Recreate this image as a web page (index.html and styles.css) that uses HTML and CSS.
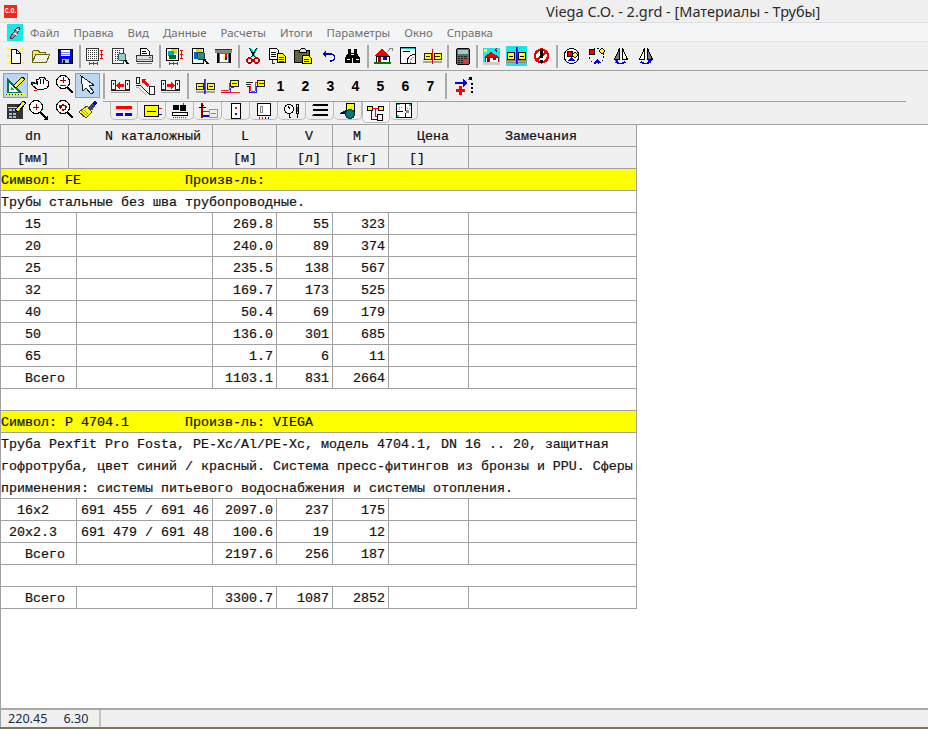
FILE: index.html
```html
<!DOCTYPE html>
<html lang="ru">
<head>
    <meta charset="UTF-8">
    <title>Viega C.O. - 2.grd - [Материалы - Трубы]</title>
    <link rel="stylesheet" href="styles.css">
</head>
<body>
<svg class="defs"><defs>
    <pattern id="dy" width="2" height="2" patternUnits="userSpaceOnUse"><rect width="2" height="2" fill="#ff0"/><rect width="1" height="1" fill="#fff"/><rect x="1" y="1" width="1" height="1" fill="#fff"/></pattern>
    <pattern id="dots" width="2" height="2" patternUnits="userSpaceOnUse"><rect width="1" height="1" fill="#333"/></pattern>
</defs></svg>
<div class="window">

    <!--заголовок-->
    <div class="titleBar">
        <div class="appIcon">C.O.</div>
        <div class="titleText">Viega C.O. - 2.grd - [Материалы - Трубы]</div>
    </div>

    <!--меню-->
    <div class="menuBar">
        <div class="docIcon"><svg width="16" height="17" viewBox="0 0 16 17"><rect width="16" height="17" fill="#19e6e6"/><path d="M3 14l3-5 5-6 2 1-3 6-5 5z" fill="#999" stroke="#333"/><path d="M7 9l3 2M9 5l3 2" stroke="#fff"/></svg></div>
        <span>Файл</span><span>Правка</span><span>Вид</span><span>Данные</span><span>Расчеты</span><span>Итоги</span><span>Параметры</span><span>Окно</span><span>Справка</span>
    </div>

    <!--панель 1-->
    <div class="toolRow">
        <div class="btn"><svg class="ic" viewBox="0 0 25 24"><path d="M4 4l4 3M21 4l-4 3M4 12h3M4 20l4-3M21 20l-4-3" stroke="#ff0" stroke-width="2"/><path d="M8.5 5.5h5l4 4v10h-9z" fill="#fff" stroke="#000"/><path d="M13.5 5.5v4h4" fill="none" stroke="#000"/></svg></div>
        <div class="btn"><svg class="ic" viewBox="0 0 25 24"><path d="M4.5 17.5v-10l1-1h5l1 2h6v2" fill="#ffe070" stroke="#660"/><path d="M4.5 18.5l3-8h14l-3 8z" fill="url(#dy)" stroke="#660"/></svg></div>
        <div class="btn"><svg class="ic" viewBox="0 0 25 24"><rect x="5.5" y="5.5" width="14" height="14" fill="#00f" stroke="#000"/><path d="M8 6h9v6H8z" fill="#fff"/><path d="M8 8h9M8 10h9" stroke="#88f"/><path d="M9 15h7v4H9z" fill="#bbb"/><path d="M10 16h2v3h-2z" fill="#003"/></svg></div>
        <div class="sep"></div>
        <div class="btn"><svg class="ic" viewBox="0 0 25 24"><rect x="4.5" y="4.5" width="12" height="12" fill="#fff" stroke="#333"/><rect x="6" y="6" width="9" height="9" fill="url(#dots)"/><path d="M19.5 6v8M18 6h3M18 14h3M18 10h3M7 19.5h8M7 18v3M15 18v3M11 18v3" stroke="#f00" fill="none"/></svg></div>
        <div class="btn"><svg class="ic" viewBox="0 0 25 24"><rect x="5.5" y="4.5" width="11" height="15" fill="#fff" stroke="#333"/><rect x="7" y="6" width="7" height="11" fill="url(#dots)"/><circle cx="15" cy="13" r="4" fill="#9cc" stroke="#355"/><path d="M18 16l3 4" stroke="#000" stroke-width="2"/></svg></div>
        <div class="btn"><svg class="ic" viewBox="0 0 25 24"><path d="M8.5 4.5h6l3 3v4h-9z" fill="#fff" stroke="#000"/><path d="M10 7h4M10 9h5" stroke="#000"/><path d="M4.5 11.5h16v6h-16z" fill="#ddd" stroke="#333"/><path d="M4 15.5h17" stroke="#888"/><path d="M17 13h2" stroke="#f00"/><path d="M5 19h15" stroke="#777"/></svg></div>
        <div class="sep"></div>
        <div class="btn"><svg class="ic" viewBox="0 0 25 24"><rect x="4.5" y="4.5" width="12" height="12" fill="#fff" stroke="#000"/><rect x="9" y="5" width="6" height="5" fill="#dd0"/><rect x="6" y="7" width="6" height="5" fill="#0aa"/><rect x="7" y="11" width="7" height="4" fill="#063"/><path d="M19.5 6v8M18 6h3M18 14h3M18 10h3M7 19.5h8M7 18v3M15 18v3M11 18v3" stroke="#f00" fill="none"/></svg></div>
        <div class="btn"><svg class="ic" viewBox="0 0 25 24"><rect x="5.5" y="4.5" width="11" height="15" fill="#fff" stroke="#000"/><rect x="9" y="5" width="6" height="5" fill="#dd0"/><rect x="7" y="8" width="5" height="7" fill="#06c"/><circle cx="14" cy="12" r="4" fill="#388" stroke="#233"/><path d="M17 15l4 5" stroke="#000" stroke-width="2"/></svg></div>
        <div class="btn"><svg class="ic" viewBox="0 0 25 24"><path d="M4 6h17v3H4z" fill="#888"/><path d="M4 5.5h17" stroke="#333"/><path d="M6.5 9v10M18.5 9v10" stroke="#000" stroke-width="2"/><rect x="8" y="9" width="9" height="9" fill="#fff" stroke="#666"/><path d="M14 10h2v3h-2z" fill="#f00"/><path d="M14 13h2v3h-2z" fill="#00f"/><path d="M12 11h2v5h-2z" fill="#ff0"/></svg></div>
        <div class="sep"></div>
        <div class="btn"><svg class="ic" viewBox="0 0 25 24"><path d="M9 4l5 9M16 4l-5 9" stroke="#0cc" stroke-width="2"/><path d="M8.5 4l5 9M15.5 4l-5 9" stroke="#000"/><circle cx="8.5" cy="16.5" r="2.6" fill="none" stroke="#b00" stroke-width="1.3"/><circle cx="15.5" cy="16.5" r="2.6" fill="none" stroke="#b00" stroke-width="1.3"/></svg></div>
        <div class="btn"><svg class="ic" viewBox="0 0 25 24"><path d="M3.5 4.5h7l2 2v9h-9z" fill="#fff" stroke="#000"/><path d="M5 8h5M5 10h5M5 12h5" stroke="#000"/><path d="M11.5 9.5h5l3 3v6h-8z" fill="#ff0" stroke="#000"/><path d="M13 13h5M13 15h5M13 17h5" stroke="#333"/><path d="M6 16v3h3" stroke="#333" fill="none"/></svg></div>
        <div class="btn"><svg class="ic" viewBox="0 0 25 24"><path d="M3.5 6.5h15v12h-15z" fill="#663" stroke="#000"/><path d="M8.5 6.5l2-2h3l2 2v2h-7z" fill="#ddd" stroke="#000"/><path d="M11.5 11.5h6l3 3v5h-9z" fill="#ff0" stroke="#000"/><path d="M13 15h5M13 17h5" stroke="#00a"/></svg></div>
        <div class="btn"><svg class="ic" viewBox="0 0 25 24"><path d="M9 10h6c5 0 5 7-1 7" fill="none" stroke="#00a" stroke-width="1.4"/><path d="M6 10l4-3v6z" fill="#00a"/></svg></div>
        <div class="btn"><svg class="ic" viewBox="0 0 25 24"><path d="M8 5h3v4h3V5h3v4l3 5v5h-7v-5h-1v5H5v-5l3-5z" fill="#000"/><path d="M7 15h3M16 15h3M11 10h3" stroke="#fff"/></svg></div>
        <div class="sep"></div>
        <div class="btn"><svg class="ic" viewBox="0 0 25 24"><path d="M4 12l8-7 8 7z" fill="#e00"/><path d="M6 12h13v6H6z" fill="#fff" stroke="#000"/><path d="M8 13h3v5H8z" fill="#900"/><path d="M13 13h4v3h-4z" fill="#00f"/><path d="M4 18h17v2H4z" fill="#070"/><path d="M17 8l4-4M19 4h3v3" stroke="#888" fill="none"/></svg></div>
        <div class="btn"><svg class="ic" viewBox="0 0 25 24"><path d="M5.5 3.5h15v16h-15z" fill="#fff" stroke="#000"/><path d="M6 4h14v1H6z" fill="#0cc"/><path d="M8 7h7" stroke="#000"/><path d="M12 19c0-5 2-8 8-9" fill="none" stroke="#000"/><path d="M15 19c0-3 2-6 5-6" fill="none" stroke="#999" stroke-dasharray="2 1"/></svg></div>
        <div class="btn"><svg class="ic" viewBox="-2 -2 29 28"><path d="M2 16h21M2 18h21M2 20h21" stroke="#999"/><rect x="3.5" y="8.5" width="8" height="7" fill="#ff0" stroke="#000"/><rect x="14.5" y="8.5" width="8" height="7" fill="#ff0" stroke="#000"/><path d="M5 12h5M16 12h5" stroke="#000"/><path d="M12 4v17" stroke="#00f"/><path d="M13 4v17" stroke="#f00"/></svg></div>
        <div class="sep"></div>
        <div class="btn"><svg class="ic" viewBox="0 0 25 24"><rect x="6.5" y="4.5" width="13" height="16" rx="2" fill="#666" stroke="#000"/><rect x="8" y="6" width="10" height="4" fill="#9cc"/><path d="M8 12h2M11 12h2M14 12h3M8 14h2M11 14h2M14 14h3M8 16h2M11 16h2M8 18h2M11 18h2" stroke="#222"/><path d="M14 16h3M14 18h3" stroke="#e33"/></svg></div>
        <div class="sep"></div>
        <div class="btn"><svg class="ic" viewBox="0 0 25 24"><rect x="4" y="4" width="17" height="17" fill="#19e6e6"/><path d="M5 5h3v3H5z" fill="#ff0"/><path d="M16 6l2-2M18 8l-2-3" stroke="#333"/><path d="M5 13l7-5 8 5z" fill="#e00"/><path d="M6 13h13v5H6z" fill="#fff" stroke="#900"/><path d="M8 14h3v4H8zM14 14h3v2h-3z" fill="#900"/><path d="M4 18h17v3H4z" fill="#ccc"/></svg></div>
        <div class="btn"><svg class="ic" viewBox="0 0 25 24"><rect x="2" y="2" width="21" height="20" fill="#19e6e6"/><path d="M2 16h21M2 18h21" stroke="#888"/><rect x="3.5" y="8.5" width="7" height="7" fill="#ff0" stroke="#000"/><rect x="14.5" y="8.5" width="7" height="7" fill="#ff0" stroke="#000"/><path d="M5 12h4M16 12h4" stroke="#000"/><path d="M12 3v17" stroke="#00f"/><path d="M13 3v17" stroke="#f00"/></svg></div>
        <div class="btn"><svg class="ic" viewBox="0 0 25 24"><circle cx="12.5" cy="12" r="6.5" fill="#fff" stroke="#e00" stroke-width="2.4"/><path d="M7 17l11-10" stroke="#e00" stroke-width="2"/><path d="M11 5h3v9h-3zM11 16h3v3h-3z" fill="#000"/></svg></div>
        <div class="sep"></div>
        <div class="btn"><svg class="ic" viewBox="0 0 25 24"><circle cx="12.5" cy="12" r="7.5" fill="#fff" stroke="#000"/><rect x="8" y="7" width="5" height="5" fill="#e00" stroke="#000"/><circle cx="16" cy="11" r="2.2" fill="#ff0" stroke="#000"/><path d="M8 17l4-4 4 4z" fill="#00c"/></svg></div>
        <div class="btn"><svg class="ic" viewBox="0 0 25 24"><circle cx="12.5" cy="12" r="7.5" fill="none" stroke="#000" stroke-dasharray="2 2"/><rect x="5" y="5" width="5" height="5" fill="#e00" stroke="#000"/><circle cx="18" cy="7" r="2.2" fill="#ff0" stroke="#000"/><path d="M9 19l4-4 4 4z" fill="#00c"/></svg></div>
        <div class="btn"><svg class="ic" viewBox="0 0 25 24"><path d="M11.5 4.5v11h-5z" fill="#777" stroke="#000"/><path d="M14.5 4.5v11h5z" fill="#fff" stroke="#000"/><path d="M8 18c2 2 7 2 9 0" fill="none" stroke="#00f" stroke-width="1.6"/><path d="M6 16h4v4z" fill="#00f"/></svg></div>
        <div class="btn"><svg class="ic" viewBox="0 0 25 24"><path d="M11.5 4.5v11h-5z" fill="#fff" stroke="#000"/><path d="M14.5 4.5v11h5z" fill="#777" stroke="#000"/><path d="M8 18c2 2 7 2 9 0" fill="none" stroke="#00f" stroke-width="1.6"/><path d="M19 16h-4v4z" fill="#00f"/></svg></div>
    </div>

    <!--панель 2-->
    <div class="toolBlock">
        <div class="leftTools">
            <div class="tool active"><svg class="ic" viewBox="0 0 25 24"><path d="M5 20V7l13 13z" fill="#fff" stroke="#075" stroke-width="2"/><path d="M8 17v-3l3 3z" fill="#0a7"/><path d="M10 13l9-9 3 2-9 9z" fill="#ff0" stroke="#000"/><path d="M2 21h20" stroke="#ff0" stroke-width="2"/><path d="M3 21h18" stroke="#000" stroke-dasharray="1 2"/></svg></div>
            <div class="tool"><svg class="ic" viewBox="0 0 25 24"><path d="M5 13l-2-3 2-1 3 2 1-5 2 0 1-2 2 1 2-1 2 3 2 1 1 4-2 3-3 1-5 1-2-1z" fill="#fff" stroke="#000"/><path d="M9 8l1 4M12 6l1 5M15 6l1 5" stroke="#000"/><path d="M4 10l2 1M6 17l3 1" stroke="#e00"/></svg></div>
            <div class="tool small"><svg class="ic" viewBox="0 0 25 24"><circle cx="10" cy="9" r="6.5" fill="#fff" stroke="#000"/><path d="M7 7h6M10 4v6M7 12h6" stroke="#900"/><path d="M14 14l6 6" stroke="#000" stroke-width="2.5"/></svg></div>
            <div class="tool active"><svg class="ic" viewBox="0 0 25 24"><path d="M6 3l13 9-5 1 5 6-3 2-5-6-3 3z" fill="#fff" stroke="#222"/></svg></div>
            <div class="tool"><svg class="ic" viewBox="0 0 25 24"><rect x="4" y="6" width="16" height="15" fill="#333"/><path d="M5 9h14" stroke="#ccc"/><path d="M6 11h3v2H6zM10 11h3v2h-3zM14 11h3v2h-3zM6 15h3v2H6zM10 15h3v2h-3zM6 18h3v2H6zM10 18h3v2h-3z" fill="#9bd"/><path d="M12 12l8-9 3 2-8 9z" fill="#ff0" stroke="#000"/></svg></div>
            <div class="tool"><svg class="ic" viewBox="0 0 25 24"><circle cx="8" cy="9" r="6.5" fill="#fff" stroke="#000"/><path d="M5 9h6M8 6v6" stroke="#900"/><path d="M12 14l7 7" stroke="#000" stroke-width="2.5"/><path d="M20 17v5h-5z" fill="#000"/></svg></div>
            <div class="tool small"><svg class="ic" viewBox="0 0 25 24"><circle cx="10" cy="9" r="6.5" fill="#fff" stroke="#000"/><path d="M7 10c0-3 5-4 6-1 0 3-3 3-4 3" fill="none" stroke="#900" stroke-width="1.5"/><path d="M6 7l1 4 3-2z" fill="#900"/><path d="M14 14l6 6" stroke="#000" stroke-width="2.5"/></svg></div>
            <div class="tool"><svg class="ic" viewBox="0 0 25 24"><path d="M4 14l8-6 5 6-6 6z" fill="#ff0" stroke="#444"/><path d="M7 13l5 5M9 12l4 4" stroke="#888"/><path d="M13 9l4-4 3 3-3 5z" fill="#446"/><path d="M17 5l3-2 2 2-2 3z" fill="#00c"/></svg></div>
        </div>
        <div class="rightTools">
            <div class="topTools">
                <div class="sepTall first"></div>
                <div class="tool"><svg class="ic" viewBox="-2 -2 29 28"><rect x="1.5" y="5.5" width="5" height="10" fill="#fff" stroke="#000"/><rect x="18.5" y="5.5" width="5" height="10" fill="#fff" stroke="#000"/><path d="M4 9v2M21 9v2" stroke="#000"/><path d="M7 11l5-4v3h5v3h-5v3z" fill="#f00"/><path d="M1 17h23" stroke="#000"/><path d="M1 19h23" stroke="#999"/></svg></div>
                <div class="tool"><svg class="ic" viewBox="-2 -2 29 28"><rect x="1.5" y="2.5" width="4" height="7" fill="#fff" stroke="#000"/><rect x="17.5" y="12.5" width="5" height="9" fill="#fff" stroke="#000"/><path d="M1 11l5 0 10 10" fill="none" stroke="#000"/><path d="M1 14l4 0 8 8" fill="none" stroke="#999"/><path d="M8 4h6l-2 2 5 5-2 2-5-5-2 2z" fill="#f00"/></svg></div>
                <div class="tool"><svg class="ic" viewBox="-2 -2 29 28"><rect x="1.5" y="5.5" width="5" height="10" fill="#fff" stroke="#000"/><rect x="18.5" y="5.5" width="5" height="10" fill="#fff" stroke="#000"/><path d="M4 9v2M21 9v2" stroke="#000"/><path d="M18 11l-5-4v3H8v3h5v3z" fill="#f00"/><path d="M1 17h23" stroke="#000"/><path d="M1 19h23" stroke="#999"/></svg></div>
                <div class="sepTall"></div>
                <div class="tool"><svg class="ic" viewBox="-2 -2 29 28"><path d="M1 18h23M1 20h23" stroke="#999"/><rect x="2.5" y="8.5" width="8" height="8" fill="#ff0" stroke="#000"/><rect x="14.5" y="8.5" width="8" height="8" fill="#ff0" stroke="#000"/><path d="M4 12h5M16 12h5" stroke="#000"/><path d="M11.5 4v17" stroke="#00f"/><path d="M12.5 4v17" stroke="#f00"/></svg></div>
                <div class="tool"><svg class="ic" viewBox="-2 -2 29 28"><rect x="12.5" y="5.5" width="9" height="7" fill="#ff0" stroke="#000"/><path d="M14 9h6" stroke="#000"/><path d="M1 17h10V9h2" fill="none" stroke="#f00"/><path d="M1 19h12v-5h3" fill="none" stroke="#00f"/><path d="M1 20h23" stroke="#f00"/></svg></div>
                <div class="tool"><svg class="ic" viewBox="-2 -2 29 28"><rect x="14.5" y="5.5" width="9" height="7" fill="#ff0" stroke="#000"/><path d="M16 9h6" stroke="#000"/><path d="M1 8h8M1 10h6M3 12h4" stroke="#000"/><path d="M7 12v6h5V8h2" fill="none" stroke="#f00"/><path d="M5 12v8h9v-8h2" fill="none" stroke="#00f"/></svg></div>
                <div class="num">1</div><div class="num">2</div><div class="num">3</div><div class="num">4</div><div class="num">5</div><div class="num">6</div><div class="num">7</div>
                <div class="sepTall last"></div>
                <div class="tool"><svg class="ic" viewBox="0 0 25 24"><path d="M3 8h8V5l5 4-5 4v-3H3z" fill="#00f"/><path d="M4 15h3v-3h3v3h3v3h-3v3H7v-3H4z" fill="#f00"/><path d="M17 3h3v3h-3zM19 9h2v2h-2zM19 13h2v2h-2zM19 17h2v2h-2z" fill="#000"/><path d="M16 5h2" stroke="#f00"/></svg></div>
            </div>
            <div class="tabs">
                <div class="tab"><svg class="tabIc" viewBox="0 0 24 18"><path d="M4 4h16v3H4z" fill="#f00"/><path d="M4 11h7v3H4zM13 11h7v3h-7z" fill="#00f"/></svg></div>
                <div class="tab"><svg class="tabIc" viewBox="0 0 24 18"><rect x="4.5" y="3.5" width="14" height="11" fill="#ff0" stroke="#000"/><path d="M7 9h9" stroke="#000"/><path d="M19 6h3" stroke="#f00"/><path d="M19 12h3" stroke="#00f"/></svg></div>
                <div class="tab"><svg class="tabIc" viewBox="0 0 24 18"><rect x="5" y="3" width="6" height="5" fill="#000"/><circle cx="15" cy="6" r="3.5" fill="#000"/><path d="M15 1v2" stroke="#f00"/><rect x="4.5" y="10.5" width="15" height="3" fill="#fff" stroke="#000"/><path d="M5 15h14" stroke="#f00" stroke-dasharray="1 1"/></svg></div>
                <div class="tab"><svg class="tabIc" viewBox="0 0 24 18"><path d="M6 1v15" stroke="#800" stroke-width="2"/><path d="M3 5h7M5 3h3" stroke="#000"/><path d="M7 14h7" stroke="#00f" stroke-width="2"/><path d="M7 9h6" stroke="#f00"/><rect x="13.5" y="7.5" width="8" height="8" fill="#eee" stroke="#999"/><path d="M15 11h5" stroke="#888"/></svg></div>
                <div class="tab"><svg class="tabIc" viewBox="0 0 24 18"><rect x="7.5" y="1.5" width="9" height="15" fill="#fff" stroke="#000"/><path d="M11 5h2v2h-2z" fill="#f00"/><path d="M11 11h2v2h-2z" fill="#00f"/></svg></div>
                <div class="tab"><svg class="tabIc" viewBox="0 0 24 18"><rect x="5.5" y="1.5" width="13" height="12" fill="#fff" stroke="#000"/><rect x="8.5" y="4.5" width="2" height="6" fill="#fff" stroke="#888"/><path d="M7 15v2M10 15v2" stroke="#f00"/><path d="M13 15v2M16 15v2" stroke="#00f"/></svg></div>
                <div class="tab"><svg class="tabIc" viewBox="0 0 24 18"><circle cx="9" cy="7" r="4.5" fill="#fff" stroke="#000"/><path d="M8 4l2 3" stroke="#000"/><path d="M9 12v3h2" fill="none" stroke="#000"/><rect x="16.5" y="2.5" width="2" height="9" fill="#fff" stroke="#000"/><path d="M17 5v5" stroke="#f00"/><path d="M17.5 12v4" stroke="#000"/></svg></div>
                <div class="tab"><svg class="tabIc" viewBox="0 0 24 18"><path d="M5 3h15M5 8h15M5 13h15" stroke="#000" stroke-width="2"/><path d="M4 3h2" stroke="#f00"/><path d="M4 13h2" stroke="#f00"/></svg></div>
                <div class="tab"><svg class="tabIc" viewBox="0 0 24 18"><rect x="10.5" y="1.5" width="8" height="9" fill="#ff0" stroke="#000"/><path d="M3 12l8-5v5z" fill="#004"/><circle cx="14" cy="12" r="4.5" fill="#077" stroke="#033"/></svg></div>
                <div class="tab selected"><svg class="tabIc" viewBox="0 0 24 18"><rect x="3.5" y="2.5" width="5" height="4" fill="#ff0" stroke="#000"/><rect x="14.5" y="2.5" width="5" height="4" fill="#ff0" stroke="#000"/><path d="M8 4h7" stroke="#f00"/><path d="M11 4v8h4" fill="none" stroke="#f00"/><path d="M7 7v8h6" fill="none" stroke="#00f"/><rect x="13.5" y="10.5" width="5" height="6" fill="#fff" stroke="#000"/></svg></div>
                <div class="tab"><svg class="tabIc" viewBox="0 0 24 18"><rect x="4.5" y="1.5" width="15" height="14" fill="#fff" stroke="#000"/><path d="M5 2h3v1H5zM17 2h2v2h-2zM5 13h2v2H5z" fill="#0cc"/><path d="M13 2v7M13 11v4M5 9h6" stroke="#000"/><path d="M7 5h4M7 7h2M15 6h3" stroke="#888" stroke-dasharray="1 1"/><path d="M14 8h3v3h-3z" fill="#888"/></svg></div>
            </div>
        </div>
    </div>

    <!--таблица-->
    <div class="sheet">
        <table class="grid">
            <colgroup><col class="cA"><col class="cB"><col class="cC"><col class="cL"><col class="cV"><col class="cM"><col class="cP"><col class="cN"></colgroup>
            <tr class="head">
                <td class="p24">dn</td><td colspan="2" class="p36">N каталожный</td><td class="p28">L</td><td class="p28">V</td><td class="p20">M</td><td class="p28">Цена</td><td class="p36">Замечания</td>
            </tr>
            <tr class="head">
                <td class="p16">[мм]</td><td colspan="2"></td><td class="p20">[м]</td><td class="p20">[л]</td><td class="p12">[кг]</td><td class="p20">[]</td><td></td>
            </tr>
            <tr class="symbol"><td colspan="8">Символ: FE             Произв-ль:</td></tr>
            <tr><td colspan="8">Трубы стальные без шва трубопроводные.</td></tr>
            <tr><td colspan="2" class="p24">15</td><td></td><td class="val">269.8</td><td class="val">55</td><td class="val">323</td><td></td><td></td></tr>
            <tr><td colspan="2" class="p24">20</td><td></td><td class="val">240.0</td><td class="val">89</td><td class="val">374</td><td></td><td></td></tr>
            <tr><td colspan="2" class="p24">25</td><td></td><td class="val">235.5</td><td class="val">138</td><td class="val">567</td><td></td><td></td></tr>
            <tr><td colspan="2" class="p24">32</td><td></td><td class="val">169.7</td><td class="val">173</td><td class="val">525</td><td></td><td></td></tr>
            <tr><td colspan="2" class="p24">40</td><td></td><td class="val">50.4</td><td class="val">69</td><td class="val">179</td><td></td><td></td></tr>
            <tr><td colspan="2" class="p24">50</td><td></td><td class="val">136.0</td><td class="val">301</td><td class="val">685</td><td></td><td></td></tr>
            <tr><td colspan="2" class="p24">65</td><td></td><td class="val">1.7</td><td class="val">6</td><td class="val">11</td><td></td><td></td></tr>
            <tr><td colspan="2" class="p24">Всего</td><td></td><td class="val">1103.1</td><td class="val">831</td><td class="val">2664</td><td></td><td></td></tr>
            <tr><td colspan="8"></td></tr>
            <tr class="symbol"><td colspan="8">Символ: P 4704.1       Произв-ль: VIEGA</td></tr>
            <tr><td colspan="8"><div class="desc">Труба Pexfit Pro Fosta, PE-Xc/Al/PE-Xc, модель 4704.1, DN 16 .. 20, защитная<br>гофротруба, цвет синий / красный. Система пресс-фитингов из бронзы и PPU. Сферы<br>применения: системы питьевого водоснабжения и системы отопления.</div></td></tr>
            <tr><td colspan="2" class="p16">16x2</td><td class="p4">691 455 / 691 46</td><td class="val">2097.0</td><td class="val">237</td><td class="val">175</td><td></td><td></td></tr>
            <tr><td colspan="2" class="p8">20x2.3</td><td class="p4">691 479 / 691 48</td><td class="val">100.6</td><td class="val">19</td><td class="val">12</td><td></td><td></td></tr>
            <tr><td colspan="2" class="p24">Всего</td><td></td><td class="val">2197.6</td><td class="val">256</td><td class="val">187</td><td></td><td></td></tr>
            <tr><td colspan="8"></td></tr>
            <tr><td colspan="2" class="p24">Всего</td><td></td><td class="val">3300.7</td><td class="val">1087</td><td class="val">2852</td><td></td><td></td></tr>
        </table>
    </div>

    <!--статус-->
    <div class="statusBar">
        <div class="coords"><span>220.45</span><span>6.30</span></div>
    </div>
    <div class="desktop"></div>
</div>
</body>
</html>
```
FILE: styles.css
```css
* {
    margin: 0;
    padding: 0;
    box-sizing: border-box;
}

html, body {
    height: 100%;
    overflow: hidden;
}

.defs {
    display: block;
    width: 0;
    height: 0;
}

.window {
    width: 928px;
    height: 729px;
    display: flex;
    flex-direction: column;
    background-color: #f0f0f0;
    font-family: "Noto Sans", "Liberation Sans", sans-serif;
    overflow: hidden;
}

svg {
    shape-rendering: crispEdges;
    overflow: visible;
}

.titleBar {
    height: 23px;
    display: flex;
    align-items: center;
    padding-left: 4px;
    background-color: #efefef;
    border-bottom: 1px solid #dedede;
    flex-shrink: 0;
}

.appIcon {
    width: 13px;
    height: 13px;
    background-color: #f02818;
    color: #fff;
    font: bold 6.5px/13px "Liberation Mono", monospace;
    text-align: center;
    letter-spacing: -1px;
}

.titleText {
    margin-left: 529px;
    font-size: 14.5px;
    line-height: 20px;
    color: #2b2b2b;
    white-space: nowrap;
}

.menuBar {
    height: 19px;
    display: flex;
    align-items: center;
    gap: 14px;
    padding-left: 7px;
    background-color: #f4f5f7;
    border-bottom: 1px solid #e2e2e2;
    font-size: 11.4px;
    color: #6f6f6f;
    flex-shrink: 0;
}

.docIcon {
    width: 16px;
    height: 17px;
    margin-right: -7px;
}

.toolRow {
    height: 29px;
    display: flex;
    align-items: center;
    padding-left: 3px;
    border-bottom: 1px solid #a0a0a0;
    flex-shrink: 0;
}

.btn {
    width: 24.8px;
    height: 24px;
    flex-shrink: 0;
}

.ic {
    display: block;
    width: 25px;
    height: 24px;
}

.sep {
    width: 2px;
    height: 23px;
    margin: 0 1px 0 2px;
    background-color: #aaa;
    flex-shrink: 0;
}

.toolBlock {
    height: 54px;
    display: flex;
    border-bottom: 1px solid #a0a0a0;
    flex-shrink: 0;
}

.leftTools {
    width: 103px;
    padding: 2px 0 0 3px;
    display: grid;
    grid-template-columns: 25px 25px 22px 25px;
    grid-template-rows: 25px 25px;
}

.tool {
    width: 25px;
    height: 25px;
    flex-shrink: 0;
}

.tool.small {
    width: 22px;
}

.tool.active {
    background-color: #b9d6f2;
    border: 1px solid #6fa5dc;
}

.tool.active .ic {
    margin: -1px;
}

.rightTools {
    width: 803px;
    display: flex;
    flex-direction: column;
}

.topTools {
    height: 30px;
    display: flex;
    align-items: center;
}

.sepTall {
    width: 2px;
    height: 26px;
    margin: 0 4px;
    background-color: #aaa;
    flex-shrink: 0;
}

.sepTall.first {
    margin: 0 3px 0 0;
}

.sepTall.last {
    margin: 0 5px 0 2px;
}

.num {
    width: 25px;
    text-align: center;
    font: bold 14px/23px "Liberation Sans", sans-serif;
    color: #000;
    flex-shrink: 0;
}

.tabs {
    flex-grow: 1;
    display: flex;
    align-items: flex-start;
    padding-left: 7px;
    border-top: 1px solid #a0a0a0;
}

.tab {
    width: 28px;
    height: 18px;
    border-right: 1px solid #bbb;
    border-bottom: 1px solid #bbb;
    border-radius: 0 0 5px 5px;
    display: flex;
    justify-content: center;
    flex-shrink: 0;
}

.tab:first-child {
    border-left: 1px solid #bbb;
}

.tab.selected {
    height: 21px;
    background-color: #f8f8f8;
    border-left: 1px solid #bbb;
    padding-top: 2px;
}

.tabIc {
    display: block;
    width: 24px;
    height: 18px;
}

.sheet {
    flex-grow: 1;
    background-color: #fff;
    border-left: 1px solid #a0a0a0;
}

.grid {
    width: 636px;
    table-layout: fixed;
    border-collapse: separate;
    border-spacing: 0;
    font: 13.33px/19px "Liberation Mono", "Noto Sans CJK SC", monospace;
    -webkit-text-stroke: 0.2px #111;
    color: #111;
    white-space: pre;
}

.cA { width: 68px; }
.cB { width: 8px; }
.cC { width: 136px; }
.cL { width: 64px; }
.cV { width: 56px; }
.cM { width: 56px; }
.cP { width: 80px; }
.cN { width: 168px; }

.grid td {
    height: 22px;
    padding-top: 2px;
    border-right: 1px solid #a0a0a0;
    border-bottom: 1px solid #a0a0a0;
    vertical-align: top;
    overflow: hidden;
}

.desc {
    height: 64px;
    line-height: 22px;
    margin-top: -1px;
    overflow: visible;
}

.head td {
    background-color: #f0f0f0;
}

.symbol td {
    background-color: #ff0;
}

.grid td.val {
    text-align: right;
    padding-right: 3px;
}

.p4 { padding-left: 4px; }
.p8 { padding-left: 8px; }
.p12 { padding-left: 12px; }
.p16 { padding-left: 16px; }
.p20 { padding-left: 20px; }
.p24 { padding-left: 24px; }
.p28 { padding-left: 28px; }
.p36 { padding-left: 36px; }

.statusBar {
    height: 19px;
    border-top: 2px solid #a8a8a8;
    border-left: 1px solid #a0a0a0;
    flex-shrink: 0;
}

.coords {
    width: 100px;
    height: 17px;
    display: flex;
    gap: 16px;
    padding-left: 7px;
    border-right: 2px solid #c4c4c4;
    font-size: 12.6px;
    line-height: 18px;
    color: #1c2b44;
}

.desktop {
    height: 2px;
    background-color: #7d7a4a;
    flex-shrink: 0;
}
```
